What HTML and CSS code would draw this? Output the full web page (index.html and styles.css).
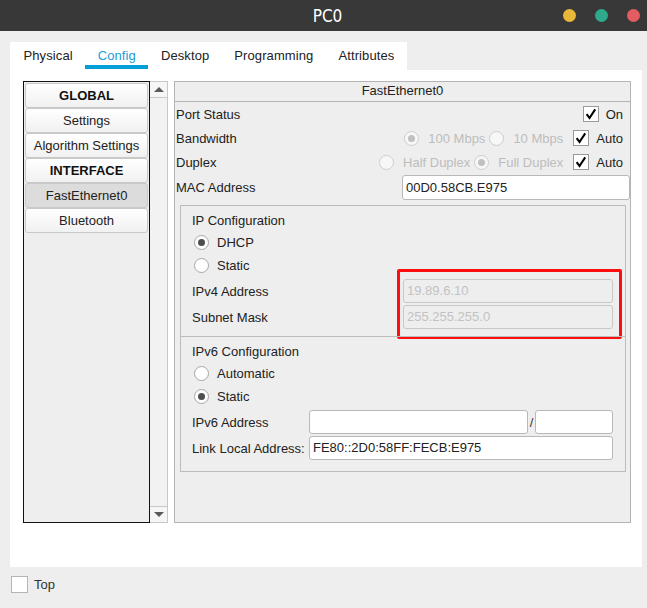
FILE: index.html
```html
<!DOCTYPE html>
<html>
<head>
<meta charset="utf-8">
<link rel="stylesheet" href="styles.css">
</head>
<body>
<div class="titlebar">
  <div></div>
  <div class="title">PC0</div>
  <div class="dots"><span class="dot yellow"></span><span class="dot green"></span><span class="dot red"></span></div>
</div>
<div class="main">
  <div class="tabs">
    <div class="tab">Physical</div>
    <div class="tab active">Config</div>
    <div class="tab">Desktop</div>
    <div class="tab">Programming</div>
    <div class="tab">Attributes</div>
  </div>
  <div class="content">
    <div class="columns">
      <div class="list">
        <div class="item bold">GLOBAL</div>
        <div class="item">Settings</div>
        <div class="item">Algorithm Settings</div>
        <div class="item bold">INTERFACE</div>
        <div class="item selected">FastEthernet0</div>
        <div class="item">Bluetooth</div>
      </div>
      <div class="scrollbar">
        <div class="sbtn"><span class="arrow up"></span></div>
        <div class="strack"></div>
        <div class="sbtn bottom"><span class="arrow down"></span></div>
      </div>
      <div class="panel">
        <div class="panel-head">FastEthernet0</div>
        <div class="prow">
          <span class="plabel">Port Status</span>
          <span class="check"><svg viewBox="0 0 16 16" width="14" height="14"><path d="M3 8.2 L6.3 12.6 L12.8 2.8" fill="none" stroke="#000" stroke-width="2.4" stroke-linejoin="miter"/></svg></span>
          <span class="ctext">On</span>
        </div>
        <div class="prow">
          <span class="plabel">Bandwidth</span>
          <span class="radio dis on"></span><span class="rtext dis">100 Mbps</span>
          <span class="radio dis"></span><span class="rtext dis">10 Mbps</span>
          <span class="check"><svg viewBox="0 0 16 16" width="14" height="14"><path d="M3 8.2 L6.3 12.6 L12.8 2.8" fill="none" stroke="#000" stroke-width="2.4"/></svg></span>
          <span class="ctext">Auto</span>
        </div>
        <div class="prow">
          <span class="plabel">Duplex</span>
          <span class="radio dis"></span><span class="rtext dis">Half Duplex</span>
          <span class="radio dis on"></span><span class="rtext dis">Full Duplex</span>
          <span class="check"><svg viewBox="0 0 16 16" width="14" height="14"><path d="M3 8.2 L6.3 12.6 L12.8 2.8" fill="none" stroke="#000" stroke-width="2.4"/></svg></span>
          <span class="ctext">Auto</span>
        </div>
        <div class="prow mac">
          <span class="plabel">MAC Address</span>
          <span class="field macfield">00D0.58CB.E975</span>
        </div>
        <div class="groups">
          <div class="group ip">
            <div class="gtitle">IP Configuration</div>
            <div class="rrow r1"><span class="radio on"></span><span class="rtext">DHCP</span></div>
            <div class="rrow r2"><span class="radio"></span><span class="rtext">Static</span></div>
            <div class="frow"><span class="flabel wide">IPv4 Address</span><span class="field dis grow">19.89.6.10</span></div>
            <div class="frow"><span class="flabel wide">Subnet Mask</span><span class="field dis grow">255.255.255.0</span></div>
            <div class="highlight"></div>
          </div>
          <div class="group ip6">
            <div class="gtitle">IPv6 Configuration</div>
            <div class="rrow r1"><span class="radio"></span><span class="rtext">Automatic</span></div>
            <div class="rrow r2"><span class="radio on"></span><span class="rtext">Static</span></div>
            <div class="frow f6"><span class="flabel">IPv6 Address</span><span class="field addr6"></span><span class="slash">/</span><span class="field prefix"></span></div>
            <div class="frow"><span class="flabel">Link Local Address:</span><span class="field grow dark">FE80::2D0:58FF:FECB:E975</span></div>
          </div>
        </div>
      </div>
    </div>
  </div>
  <div class="footer">
    <span class="topbox"></span><span class="toptext">Top</span>
  </div>
</div>
</body>
</html>
```
FILE: styles.css
```css
* { box-sizing: border-box; }
html, body { margin: 0; padding: 0; }
body {
  background: #eeeeee;
  font-family: "Liberation Sans", Arial, sans-serif;
  font-size: 13px;
  color: #222;
  width: 647px;
  height: 608px;
  overflow: hidden;
}
.titlebar {
  height: 31px;
  background: #383838;
  display: grid;
  grid-template-columns: 1fr auto 1fr;
  align-items: center;
}
.title {
  color: #fff;
  font-family: "DejaVu Sans", sans-serif;
  font-stretch: condensed;
  font-size: 17px;
  padding-left: 8px;
  padding-top: 1px;
}
.dots {
  display: flex;
  justify-content: flex-end;
  gap: 19px;
  padding-right: 7px;
}
.dot { width: 13px; height: 13px; border-radius: 50%; display: block; }
.yellow { background: #e9b73a; }
.green { background: #2ea98b; }
.red { background: #e25c62; }

.main { padding: 11px 5px 0 10px; }
.tabs {
  display: inline-flex;
  background: #fff;
  padding-left: 1px;
  padding-bottom: 1px;
  vertical-align: top;
}
.tab {
  height: 27px;
  padding: 5px 12.5px 0;
  line-height: 18px;
  letter-spacing: 0.1px;
  border-bottom: 4px solid transparent;
  color: #222;
}
.tab.active { color: #1d9bd7; border-bottom-color: #049fd9; }

.content {
  background: #fff;
  height: 497px;
  padding: 11px 11px 0 13px;
}
.columns { display: flex; height: 442px; }
.list {
  width: 128px;
  border: 1px solid #111;
  background: #eeeeee;
  padding: 1px 1px 0;
}
.item {
  height: 25px;
  border: 1px solid #c9c9c9;
  border-radius: 3px;
  background: linear-gradient(#ffffff, #f1f1f1);
  text-align: center;
  line-height: 23px;
  color: #222;
}
.item.bold { font-weight: bold; color: #111; }
.item.selected { background: #dcdcdc; }
.scrollbar {
  width: 18px;
  border: 1px solid #c8c8c8;
  border-left: none;
  background: #f2f2f2;
  display: flex;
  flex-direction: column;
}
.sbtn {
  height: 16px;
  border-bottom: 1px solid #c8c8c8;
  display: flex;
  align-items: center;
  justify-content: center;
  background: #f6f6f6;
}
.sbtn.bottom { border-bottom: none; border-top: 1px solid #c8c8c8; }
.strack { flex: 1; }
.arrow { width: 0; height: 0; border-left: 5px solid transparent; border-right: 5px solid transparent; }
.arrow.up { border-bottom: 5px solid #5a5a5a; }
.arrow.down { border-top: 5px solid #5a5a5a; }

.panel {
  flex: 1;
  margin-left: 6px;
  border: 1px solid #b4b4b4;
  background: #eeeeee;
  padding-left: 1px;
}
.panel-head {
  height: 20px;
  border-bottom: 1px solid #b4b4b4;
  margin-left: -1px;
  text-align: center;
  line-height: 18px;
}
.prow {
  display: flex;
  align-items: center;
  height: 24px;
  padding-right: 7px;
}
.plabel { flex: 1; }
.check {
  width: 16px;
  height: 16px;
  border: 1px solid #9a9a9a;
  background: #fff;
  display: flex;
  align-items: center;
  justify-content: center;
  margin-left: 6px;
}
.ctext { margin-left: 7px; }
.radio {
  width: 15px;
  height: 15px;
  border-radius: 50%;
  border: 1px solid #a6a6a6;
  background: #fff;
  display: inline-flex;
  align-items: center;
  justify-content: center;
  flex: none;
}
.radio.on::after {
  content: "";
  width: 7px;
  height: 7px;
  border-radius: 50%;
  background: #4e4e4e;
}
.radio.dis { border-color: #cdcdcd; background: #f7f7f7; }
.radio.dis.on::after { background: #c0c0c0; }
.rtext { margin-left: 8px; margin-right: 5px; }
.rtext.dis { color: #bdbdbd; }
.prow .rtext.dis { margin-left: 9px; margin-right: 4px; }
.prow.mac { height: 26px; padding-right: 0; }
.field {
  height: 25px;
  border: 1px solid #b8b8b8;
  border-radius: 3px;
  background: #fff;
  line-height: 23px;
  padding-left: 3px;
  color: #222;
  white-space: nowrap;
}
.macfield { width: 228px; }
.groups {
  margin: 5px 4px 0 4px;
  border: 1px solid #bcbcbc;
}
.group { padding: 5px 12px 0 11px; position: relative; }
.group.ip { padding-bottom: 7px; }
.group.ip6 { border-top: 1px solid #bcbcbc; padding-top: 5px; padding-bottom: 11px; }
.gtitle { height: 20px; line-height: 20px; }
.rrow { display: flex; align-items: center; padding-left: 2px; }
.rrow.r1 { height: 22px; }
.rrow.r2 { height: 24px; }
.frow { display: flex; align-items: center; margin-top: 2px; }
.frow.f6 { margin-top: 2px; }
.flabel { width: 117px; flex: none; }
.flabel.wide { width: 211px; }
.frow .field { height: 24px; line-height: 22px; }
.grow { flex: 1; }
.field.dis { background: #eeeeee; color: #c2c2c2; border-color: #c8c8c8; }
.addr6 { width: 219px; }
.slash { width: 7px; text-align: center; color: #333; }
.prefix { width: 78px; }
.highlight {
  position: absolute;
  left: 216px;
  top: 63px;
  width: 225px;
  height: 70px;
  border: 3px solid #ff0d0d;
  border-radius: 2px;
}
.footer {
  display: flex;
  align-items: center;
  margin-top: 9px;
  padding-left: 1px;
}
.topbox {
  width: 17px;
  height: 17px;
  border: 1px solid #b4b4b4;
  background: #fff;
}
.toptext { margin-left: 6px; color: #333; }
```
